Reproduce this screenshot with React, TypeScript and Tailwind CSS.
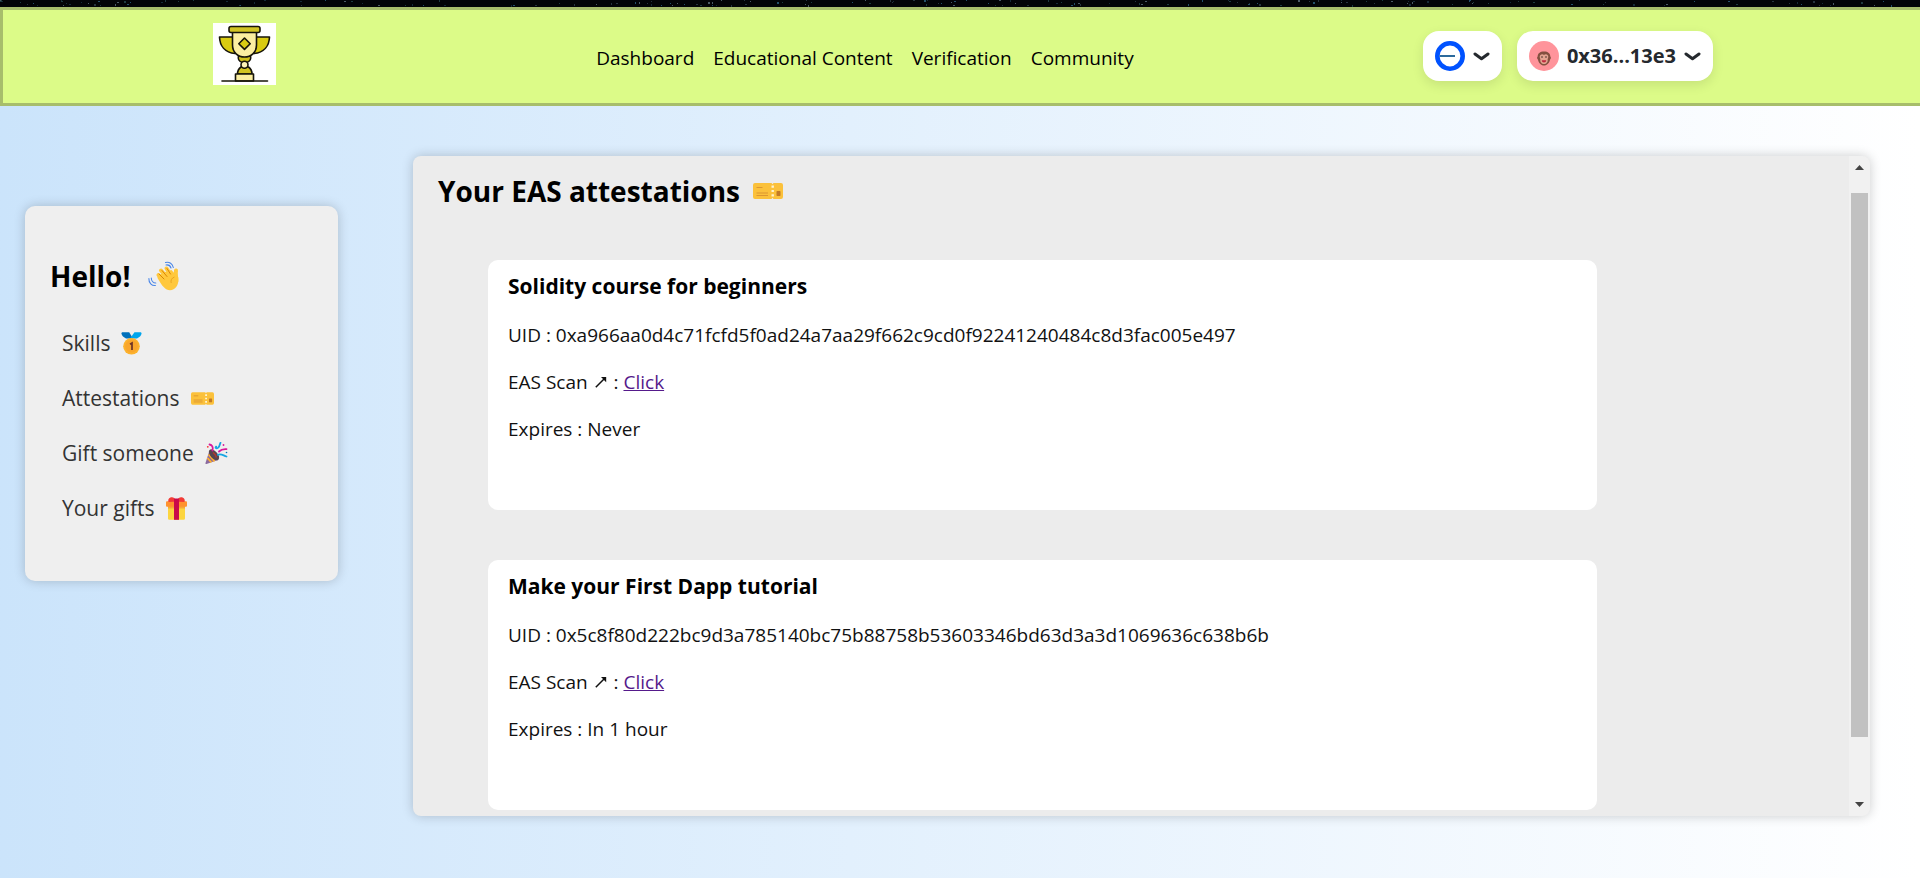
import { FC, ReactNode } from 'react';

interface Attestation {
  title: string;
  uid: string;
  expires: string;
}

const attestations: Attestation[] = [
  {
    title: 'Solidity course for beginners',
    uid: '0xa966aa0d4c71fcfd5f0ad24a7aa29f662c9cd0f92241240484c8d3fac005e497',
    expires: 'Never',
  },
  {
    title: 'Make your First Dapp tutorial',
    uid: '0x5c8f80d222bc9d3a785140bc75b88758b53603346bd63d3a3d1069636c638b6b',
    expires: 'In 1 hour',
  },
];

const navLinks = ['Dashboard', 'Educational Content', 'Verification', 'Community'];

const stars = Array.from({ length: 180 }, (_, i) => ({
  x: (i * 733 + ((i * i) % 97) * 11) % 1920,
  y: (i * 5 + ((i * i) % 7)) % 6,
  fill: ['#1d3a40', '#26333f', '#152a38', '#4b5a66', '#24506b'][i % 5],
}));

const Stars: FC = () => (
  <svg className="block h-[7px] w-full bg-[#020308]" viewBox="0 0 1920 7" preserveAspectRatio="none" aria-hidden="true">
    {stars.map((s, i) => (
      <rect key={i} x={s.x} y={s.y} width={i % 3 === 0 ? 2 : 1} height={i % 4 === 0 ? 2 : 1} fill={s.fill} />
    ))}
  </svg>
);

const Trophy: FC = () => (
  <svg className="block h-[62px] w-[63px] bg-white" viewBox="0 0 63 62" stroke="#16140a" strokeWidth="1.6" strokeLinejoin="round" aria-hidden="true">
    <path d="M20 14H6.500c.3 9 5.500 15.500 15.500 16.500z" fill="#d9cb12" />
    <path d="M43 14h13.500c-.3 9-5.500 15.500-15.500 16.500z" fill="#d9cb12" />
    <path d="M25.500 33h12c.8 3-.8 5.500-4 6.500h-4c-3.200-1-4.800-3.500-4-6.500z" fill="#cfc01a" />
    <path d="M28 44h7.500c2 1.500 3.500 4 3.500 7H24.500c0-3 1.500-5.500 3.500-7z" fill="#d2c423" />
    <path d="M19.500 9h24v13c0 7.500-5.500 12-12 12s-12-4.500-12-12z" fill="#fbeea0" />
    <rect x="16" y="3.500" width="31" height="6" rx="2" fill="#d2c423" />
    <path d="M31.500 15l5.700 5.700-5.700 5.700-5.700-5.700z" fill="#d9cb12" />
    <circle cx="31.500" cy="41.800" r="3.500" fill="#fdf4b8" />
    <rect x="22.500" y="51" width="18" height="7" fill="#fbeea0" />
    <path d="M9 58h45.500" strokeLinecap="round" />
  </svg>
);

const Chevron: FC = () => (
  <svg className="h-[9px] w-[17px]" viewBox="0 0 17 9" fill="none" stroke="#25292e" strokeWidth="3" strokeLinecap="round" strokeLinejoin="round" aria-hidden="true">
    <path d="M2 2l6.500 4.800L15 2" />
  </svg>
);

const ChainIcon: FC = () => (
  <svg className="size-[30px]" viewBox="0 0 30 30" aria-hidden="true">
    <circle cx="15" cy="15" r="12.700" fill="#fff" stroke="#0052ff" strokeWidth="4.600" />
    <path d="M4.500 15H20" stroke="#2c6a9c" strokeWidth="2" />
  </svg>
);

const Avatar: FC = () => (
  <svg className="size-[30px]" viewBox="0 0 30 30" aria-hidden="true">
    <circle cx="15" cy="15" r="15" fill="#ff949b" />
    <path d="M15 10.500c4 0 6.300 2 6.300 5 .8.400.8 2.500-.2 2.900-.8 3.600-3 6-6.100 6s-5.300-2.400-6.100-6c-1-.4-1-2.500-.2-2.900 0-3 2.300-5 6.300-5z" fill="#83503f" />
    <path d="M15 14c1.300-1.400 4.300-1 4.300 1.800 0 1-.4 1.700-.7 2.400.7 2.600-1.200 4.800-3.600 4.800s-4.300-2.200-3.600-4.800c-.3-.7-.7-1.400-.7-2.400 0-2.800 3-3.200 4.300-1.800z" fill="#e3a491" />
    <circle cx="13" cy="16" r=".8" fill="#3f2a24" />
    <circle cx="17" cy="16" r=".8" fill="#3f2a24" />
    <path d="M12.800 19.300h4.400c0 3-4.400 3-4.400 0z" fill="#c0283e" />
  </svg>
);

const Ticket: FC<{ className: string }> = ({ className }) => (
  <svg className={className} viewBox="0 0 30 16" aria-hidden="true">
    <path d="M2 0h16.500l1 1.200 1-1.200H28a2 2 0 0 1 2 2v12a2 2 0 0 1-2 2h-7.500l-1-1.200-1 1.200H2a2 2 0 0 1-2-2V2a2 2 0 0 1 2-2z" fill="#fbc13b" />
    <path d="M18.500 2.500h2.400v2.200h-2.400zM18.500 6.900h2.400v2.200h-2.400zM18.500 11.300h2.400v2.200h-2.400z" fill="#fff3d0" />
    <path d="M3.500 4.500h6M3.500 10h11.500M3.500 12.500h11.500" stroke="#dc9631" strokeWidth="1.200" />
    <rect x="23.500" y="8" width="4" height="5" rx=".8" fill="#c27a26" />
  </svg>
);

const Wave: FC = () => (
  <svg className="size-[31px]" viewBox="0 0 31 31" aria-hidden="true">
    <g stroke="#ffc83d" strokeLinecap="round" fill="none">
      <path d="M10.500 14l8 8M13 9.500l8 9M18.500 7.500l6 9" strokeWidth="4" />
      <path d="M28 9.500c-.8 4 .5 7 .3 11" strokeWidth="4" />
    </g>
    <path d="M9.500 16l6-4.500 8-2.500 3.500 4 3.200 3c1 7-2 13.200-8.200 13.200-4.500 0-8-4.200-12.500-12.200z" fill="#ffc83d" />
    <path d="M11 13l5 5M14 9.500l5 6M19 7.500l3.500 5.500" stroke="#d67d00" strokeWidth=".9" strokeLinecap="round" fill="none" />
    <path d="M26.500 16c-3 1-4 3.500-3.300 6" stroke="#e39a1b" strokeWidth=".8" fill="none" />
    <path d="M17.500 1.500c4-1 7 1.500 7.800 5M18 4c2.600-.4 4.400 1 5 3M.9 17.500c-.3 4.500 3 7.500 6.500 7M3.300 17c0 3 2 5 4.500 5" stroke="#4a86e8" strokeWidth="1.100" strokeLinecap="round" fill="none" />
  </svg>
);

const Medal: FC = () => (
  <svg className="h-[23px] w-[21px]" viewBox="0 0 21 23" aria-hidden="true">
    <path d="M.5 1.500C.5.700 1 .3 1.700.3h6.500L12 6.500H5C3 5.500.5 3.500.5 1.500z" fill="#0070bb" />
    <path d="M20.500 1.500c0-.8-.5-1.200-1.200-1.200h-5.800L9 6.500h7c2-1 4.500-3 4.500-5z" fill="#00a6ed" />
    <circle cx="10.500" cy="14.300" r="8.300" fill="#fcb22d" />
    <circle cx="10.500" cy="14.300" r="6.300" fill="#f9a62c" />
    <path d="M9 12.200l2-1.200v7" stroke="#6d3326" strokeWidth="1.700" fill="none" />
  </svg>
);

const Popper: FC = () => (
  <svg className="size-[23px]" viewBox="0 0 23 23" aria-hidden="true">
    <path d="M4.500 8.500c3-.5 8.500 4.500 8.500 9.500L1.500 22c-.7.200-1.200-.2-1-1z" fill="#8b6a9e" />
    <path d="M3.600 12.300l5.900 7M2.400 16l4 4.400" stroke="#ffb02e" strokeWidth="1.800" />
    <ellipse cx="9" cy="12.800" rx="6.600" ry="3.600" transform="rotate(48 9 12.800)" fill="#55454f" />
    <path d="M8 10.500l3 3M10.500 13.500l1 2" stroke="#b0392f" strokeWidth="1.600" />
    <path d="M4.500 2.500C7 3 8.500 5 7.500 8.500M14 9.500c2-2 5-2.500 7.500-2.300" stroke="#d8189b" strokeWidth="1.800" strokeLinecap="round" fill="none" />
    <path d="M15.500.8c-1 1.700-.6 3.200-2.300 4.800-2 1.500-3.500 0-2-1M13 12.800c3-1.500 5 .6 8.500 1.700" stroke="#16a5e2" strokeWidth="1.800" strokeLinecap="round" fill="none" />
    <circle cx="2.800" cy="4.800" r=".9" fill="#f8312f" />
    <circle cx="18.500" cy="3" r=".9" fill="#d8189b" />
    <circle cx="21.500" cy="10.500" r=".8" fill="#0074ba" />
  </svg>
);

const Gift: FC = () => (
  <svg className="h-[23px] w-[21px]" viewBox="0 0 21 23" aria-hidden="true">
    <path d="M2 8h17v13.500a1.300 1.300 0 0 1-1.300 1.300H3.300A1.300 1.300 0 0 1 2 21.500z" fill="#fcd53f" />
    <path d="M2 9h17v2.500H2z" fill="#f5a936" />
    <rect x="0" y="4.300" width="21" height="5.500" rx="1" fill="#ff922e" />
    <path d="M10.500 4.800C9 .5 6.500-.5 4 .7 2.200 1.700 2 3.500 2.500 5zM10.500 4.800C12 .5 14.500-.5 17 .7c1.800 1 2 2.800 1.500 4.300z" fill="#f23b36" />
    <rect x="8" y="1.500" width="5" height="21.300" fill="#ca0b4a" />
  </svg>
);

const NorthEastArrow: FC = () => (
  <svg className="mx-[2px] mb-[3px] inline-block size-[12px]" viewBox="0 0 12 12" fill="none" stroke="#111" aria-hidden="true">
    <path d="M.8 11.200L10 2" strokeWidth="1.500" />
    <path d="M6 1h5.200v5.200z" fill="#111" stroke="none" />
  </svg>
);

const sideLinks: { label: string; icon: ReactNode }[] = [
  { label: 'Skills', icon: <Medal /> },
  { label: 'Attestations', icon: <Ticket className="h-[13px] w-[23px]" /> },
  { label: 'Gift someone', icon: <Popper /> },
  { label: 'Your gifts', icon: <Gift /> },
];

const Header: FC = () => (
  <header className="flex h-[99px] items-start justify-between border-y-3 border-l-3 border-[#a7bd6b] bg-[#dcfb88] pt-[13px] pr-[207px] pl-[210px]">
    <Trophy />
    <nav className="flex gap-[19px] pt-[5px] pl-[31px] text-[19px] leading-[60px] font-medium text-black">
      {navLinks.map(link => (
        <a key={link} href="#">{link}</a>
      ))}
    </nav>
    <div className="flex gap-[15px] pt-2">
      <button className="flex h-[50px] items-center gap-2 rounded-2xl bg-white px-3 shadow-[0_4px_12px_rgba(0,0,0,0.1)]" aria-label="Network">
        <ChainIcon />
        <Chevron />
      </button>
      <button className="flex h-[50px] items-center gap-2 rounded-2xl bg-white px-3 text-[20px] font-bold text-[#25292e] shadow-[0_4px_12px_rgba(0,0,0,0.1)]">
        <Avatar />
        0x36...13e3
        <Chevron />
      </button>
    </div>
  </header>
);

const Sidebar: FC = () => (
  <aside className="mt-[50px] h-[375px] w-[313px] shrink-0 rounded-[10px] bg-[#efefef] px-[25px] pt-[50px] shadow-[0_0_12px_rgba(0,0,0,0.2)]">
    <h2 className="flex items-center gap-[18px] text-[28px] leading-[40px] font-bold text-black">
      Hello! <Wave />
    </h2>
    <ul className="mt-[20px] flex flex-col text-[21px] leading-[55px] text-[#333]">
      {sideLinks.map(item => (
        <li key={item.label}>
          <a href="#" className="flex items-center gap-[11px] pl-3">
            {item.label} {item.icon}
          </a>
        </li>
      ))}
    </ul>
  </aside>
);

const AttestationCard: FC<{ item: Attestation }> = ({ item }) => (
  <article className="h-[250px] rounded-[10px] bg-white px-5 pt-[11px] text-[19px] leading-[30px] text-[#111]">
    <h3 className="text-[21px] font-bold text-black">{item.title}</h3>
    <p className="mt-[19px]">UID : {item.uid}</p>
    <p className="mt-[17px]">
      EAS Scan <NorthEastArrow /> : <a href="#" className="text-[#551a8b] underline">Click</a>
    </p>
    <p className="mt-[17px]">Expires : {item.expires}</p>
  </article>
);

const ScrollBar: FC = () => (
  <div className="flex w-[21px] shrink-0 flex-col bg-[#f1f1f1] px-[2px]">
    <button className="flex h-[37px] justify-center pt-[9px]" aria-label="Scroll up">
      <svg className="h-[5px] w-[9px]" viewBox="0 0 9 5" aria-hidden="true"><path d="M0 5L4.500 0 9 5z" fill="#444" /></svg>
    </button>
    <div className="h-[544px] bg-[#c1c1c1]" />
    <button className="flex flex-1 items-end justify-center pb-[9px]" aria-label="Scroll down">
      <svg className="h-[5px] w-[9px]" viewBox="0 0 9 5" aria-hidden="true"><path d="M0 0h9L4.500 5z" fill="#444" /></svg>
    </button>
  </div>
);

const App: FC = () => {
  return (
    <div className="flex min-h-screen flex-col bg-[#020308] font-['Segoe_UI','Open_Sans',sans-serif]">
      <Stars />
      <Header />
      <div className="flex flex-1 items-start gap-[75px] bg-linear-to-r from-[#cbe4fb] to-white pt-[50px] pr-[50px] pb-[50px] pl-[25px]">
        <Sidebar />
        <main className="flex h-[660px] min-w-0 flex-1 overflow-hidden rounded-[8px] bg-[#ececec] shadow-[0_0_12px_rgba(0,0,0,0.2)]">
          <section className="min-w-0 flex-1 px-[25px] pt-[15px]">
            <h2 className="flex items-center gap-[13px] text-[28px] leading-[40px] font-bold text-black">
              Your EAS attestations <Ticket className="h-4 w-[30px]" />
            </h2>
            <div className="mt-[49px] ml-[50px] flex w-4/5 flex-col gap-[50px]">
              {attestations.map(item => (
                <AttestationCard key={item.uid} item={item} />
              ))}
            </div>
          </section>
          <ScrollBar />
        </main>
      </div>
    </div>
  );
};

export default App;
